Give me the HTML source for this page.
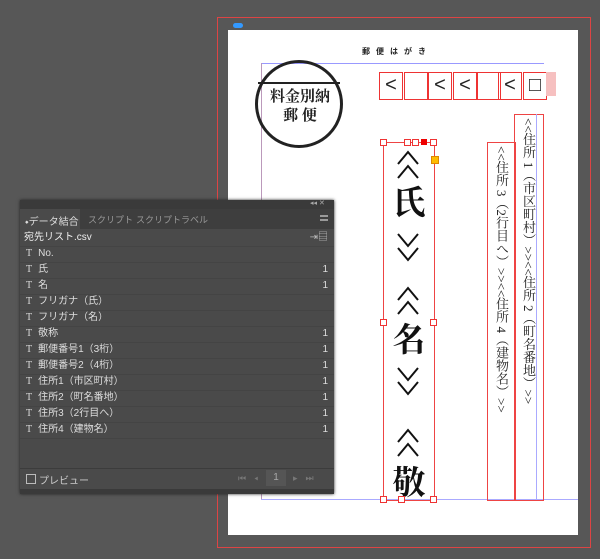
<!DOCTYPE html>
<html><head><meta charset="utf-8"><style>
body{margin:0;width:600px;height:559px;background:#575757;position:relative;overflow:hidden;font-family:"Liberation Sans","Noto Sans CJK JP",sans-serif}
.a{position:absolute}
.v{writing-mode:vertical-rl;font-family:"Liberation Serif","Noto Serif CJK SC",serif;color:#222}
.row{position:absolute;left:20px;width:310px;height:16px;font-size:10px;color:#ddd;line-height:16px;border-bottom:1px solid #444;padding-left:4px}
.row span{position:absolute;right:6px}
.row b{font-weight:normal;font-family:"Liberation Serif",serif;margin:0 6px 0 2px}
.pb{position:absolute;top:72px;width:22px;height:26px;border:1px solid #e33;font-size:20px;line-height:24px;text-align:center;color:#222}
.h{position:absolute;width:5px;height:5px;border:1px solid #e33;background:#fff}
.c{position:absolute;left:384px;width:50px;text-align:center;font-family:"Liberation Serif","Noto Serif CJK SC",serif;color:#111;font-weight:bold}
.k{font-size:33px;line-height:36px}
svg.ch{position:absolute;left:396px}
</style></head><body>
<div class="a" style="left:217px;top:17px;width:372px;height:529px;border:1px solid #d44"></div>
<div class="a" style="left:228px;top:30px;width:350px;height:505px;background:#fff"></div>
<div class="a" style="left:233px;top:23px;width:10px;height:5px;border-radius:3px;background:#39f"></div>
<div class="a" style="left:261px;top:63px;width:283px;height:1px;background:#99f"></div>
<div class="a" style="left:261px;top:63px;width:1px;height:437px;background:#b9b"></div>
<div class="a" style="left:261px;top:499px;width:317px;height:1px;background:#aaf"></div>
<div class="a" style="left:362px;top:46px;font-size:8px;font-weight:bold;letter-spacing:6px;color:#222">郵便はがき</div>
<div class="a" style="left:255px;top:60px;width:82px;height:82px;border:3px solid #222;border-radius:50%"></div>
<div class="a" style="left:258px;top:82px;width:82px;height:2px;background:#222"></div>
<div class="a" style="left:259px;top:88px;width:82px;text-align:center;font-family:'Liberation Serif','Noto Serif CJK SC',serif;font-weight:bold;font-size:15px;line-height:19px;color:#222">料金別納<br>郵 便</div>
<div class="pb" style="left:379px">&lt;</div><div class="pb" style="left:404px"></div><div class="pb" style="left:428px">&lt;</div>
<div class="pb" style="left:453px">&lt;</div><div class="pb" style="left:477px"></div><div class="pb" style="left:498px">&lt;</div>
<div class="pb" style="left:523px">□</div>
<div class="a" style="left:546px;top:72px;width:10px;height:24px;background:#f6c0c0"></div>
<div class="a" style="left:383px;top:142px;width:50px;height:357px;border:1px solid #e44"></div>
<svg class="ch" style="top:150px" width="24" height="30"><path d="M2 14L12 2L22 14M2 28L12 16L22 28" fill="none" stroke="#111" stroke-width="2"/></svg>
<div class="c k" style="top:186px">氏</div>
<svg class="ch" style="top:232px" width="24" height="30"><path d="M2 2L12 14L22 2M2 16L12 28L22 16" fill="none" stroke="#111" stroke-width="2"/></svg>
<svg class="ch" style="top:286px" width="24" height="30"><path d="M2 14L12 2L22 14M2 28L12 16L22 28" fill="none" stroke="#111" stroke-width="2"/></svg>
<div class="c k" style="top:323px">名</div>
<svg class="ch" style="top:366px" width="24" height="30"><path d="M2 2L12 14L22 2M2 16L12 28L22 16" fill="none" stroke="#111" stroke-width="2"/></svg>
<svg class="ch" style="top:428px" width="24" height="30"><path d="M2 14L12 2L22 14M2 28L12 16L22 28" fill="none" stroke="#111" stroke-width="2"/></svg>
<div class="c k" style="top:466px">敬</div>
<div class="h" style="left:380px;top:139px"></div><div class="h" style="left:404px;top:139px"></div><div class="h" style="left:412px;top:139px"></div><div class="a" style="left:421px;top:139px;width:6px;height:6px;background:#e00"></div><div class="h" style="left:430px;top:139px"></div>
<div class="a" style="left:431px;top:156px;width:6px;height:6px;background:#fb0;border:1px solid #d80"></div>
<div class="h" style="left:380px;top:319px"></div><div class="h" style="left:430px;top:319px"></div>
<div class="h" style="left:380px;top:496px"></div><div class="h" style="left:398px;top:496px"></div><div class="h" style="left:430px;top:496px"></div>
<div class="a" style="left:487px;top:142px;width:27px;height:357px;border:1px solid #e44"></div>
<div class="v a" style="left:490px;top:146px;font-size:13px;width:22px;line-height:22px">&lt;&lt;住所 3（2行目へ）&gt;&gt;&lt;&lt;住所 4（建物名）&gt;&gt;</div>
<div class="a" style="left:514px;top:114px;width:28px;height:385px;border:1px solid #e44"></div>
<div class="a" style="left:536px;top:114px;width:1px;height:385px;background:#aaf"></div>
<div class="v a" style="left:517px;top:118px;font-size:13px;width:22px;line-height:22px">&lt;&lt;住所 1（市区町村）&gt;&gt;&lt;&lt;住所 2（町名番地）&gt;&gt;</div>
<!-- panel -->
<div class="a" style="left:20px;top:200px;width:314px;height:294px;background:#4a4a4a;box-shadow:0 0 3px #222"></div>
<div class="a" style="left:20px;top:200px;width:314px;height:9px;background:#3a3a3a"></div>
<div class="a" style="left:310px;top:199px;font-size:7px;color:#aaa">◂◂ ✕</div>
<div class="a" style="left:20px;top:209px;width:314px;height:20px;background:#3e3e3e"></div>
<div class="a" style="left:20px;top:209px;width:60px;height:20px;background:#4a4a4a"></div>
<div class="a" style="left:25px;top:213px;font-size:10px;color:#ddd">⬩データ結合</div>
<div class="a" style="left:88px;top:213px;font-size:9px;color:#999">スクリプト</div>
<div class="a" style="left:136px;top:213px;font-size:9px;color:#999">スクリプトラベル</div>
<div class="a" style="left:320px;top:215px;width:8px;height:6px;border-top:2px solid #999;border-bottom:2px solid #999;box-sizing:border-box"></div>
<div class="row" style="top:230px;color:#eee">宛先リスト.csv<span style="color:#bbb">⇥▤</span></div>
<div class="row" style="top:246px"><b>T</b>No.</div>
<div class="row" style="top:262px"><b>T</b>氏<span>1</span></div>
<div class="row" style="top:278px"><b>T</b>名<span>1</span></div>
<div class="row" style="top:294px"><b>T</b>フリガナ（氏）</div>
<div class="row" style="top:310px"><b>T</b>フリガナ（名）</div>
<div class="row" style="top:326px"><b>T</b>敬称<span>1</span></div>
<div class="row" style="top:342px"><b>T</b>郵便番号1（3桁）<span>1</span></div>
<div class="row" style="top:358px"><b>T</b>郵便番号2（4桁）<span>1</span></div>
<div class="row" style="top:374px"><b>T</b>住所1（市区町村）<span>1</span></div>
<div class="row" style="top:390px"><b>T</b>住所2（町名番地）<span>1</span></div>
<div class="row" style="top:406px"><b>T</b>住所3（2行目へ）<span>1</span></div>
<div class="row" style="top:422px"><b>T</b>住所4（建物名）<span>1</span></div>
<div class="a" style="left:20px;top:468px;width:314px;height:1px;background:#3c3c3c"></div>
<div class="a" style="left:26px;top:474px;width:8px;height:8px;border:1px solid #bbb"></div>
<div class="a" style="left:39px;top:472px;font-size:10px;color:#ccc">プレビュー</div>
<div class="a" style="left:238px;top:473px;font-size:9px;color:#777;letter-spacing:8px">⏮◂</div>
<div class="a" style="left:266px;top:470px;width:20px;height:16px;background:#555;color:#aaa;font-size:10px;line-height:16px;text-align:center">1</div>
<div class="a" style="left:293px;top:473px;font-size:9px;color:#777;letter-spacing:8px">▸⏭</div>
<div class="a" style="left:20px;top:489px;width:314px;height:5px;background:#3a3a3a"></div>
</body></html>
